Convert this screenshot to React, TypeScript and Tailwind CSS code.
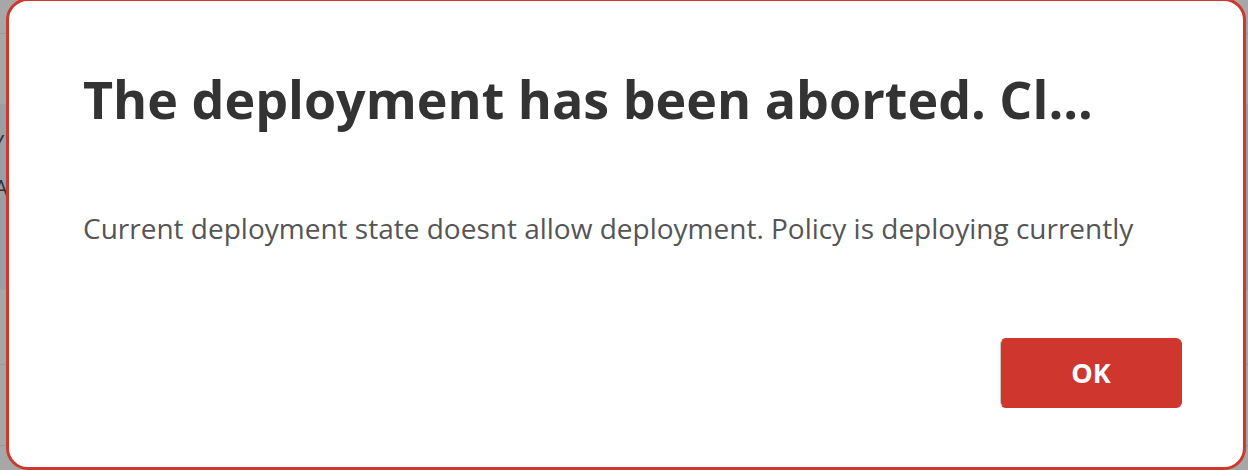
import React from 'react';

const font = { fontFamily: '"Open Sans", "Noto Sans", sans-serif' };

export default function App() {
  return (
    <div className="relative h-[470px] w-[1248px] overflow-hidden bg-[#a7a7a7]" style={font}>
      {/* page behind the modal */}
      <div className="flex h-full flex-col">
        <div className="h-[34px] border-b border-[#999]" />
        <div className="mt-[70px] h-[186px] bg-[#9b9ea5] pt-[16px] text-[22px] leading-[45px] text-[#333]">
          <div className="-ml-[8px]">Y</div>
          <div className="-ml-[6px]">A</div>
        </div>
        <div className="mt-[74px] h-px bg-[#999]" />
        <div className="mt-[80px] h-px bg-[#999]" />
      </div>

      {/* modal */}
      <div className="absolute left-[6px] top-[-2px] flex h-[472px] w-[1240px] flex-col rounded-[22px] border-[3px] border-[#cc3a2f] bg-white pl-[74px] pr-[61px]">
        <h1 className="mt-[64px] text-[52px] font-bold leading-[68px] whitespace-nowrap text-[#333]">
          The deployment has been aborted. Cl...
        </h1>
        <p className="mt-[77px] text-[28px] leading-[36px] whitespace-nowrap text-[#555]">
          Current deployment state doesnt allow deployment. Policy is deploying currently
        </p>
        <div className="mt-auto mb-[59px] flex justify-end">
          <button className="h-[70px] w-[182px] rounded-[6px] border border-[#c9c9c9] border-t-[#cf372e] border-r-[#cf372e] border-b-[#cf372e] bg-[#cf372e] text-[27px] font-bold text-white">
            OK
          </button>
        </div>
      </div>
    </div>
  );
}
